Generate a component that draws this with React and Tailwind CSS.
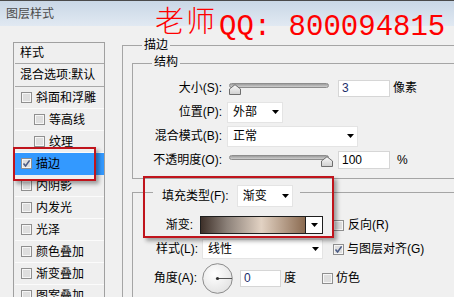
import React from "react";

const Arrow = () => (
  <svg width="7" height="4" viewBox="0 0 7 4" className="shrink-0">
    <polygon points="0,0 7,0 3.5,4" fill="#000" />
  </svg>
);

const Check = ({ checked }) => (
  <span className="w-[11px] h-[11px] shrink-0 border border-[#8f8f8f] bg-[#dedede] shadow-[inset_0_0_0_1px_#f6f6f6] flex items-center justify-center">
    {checked && (
      <svg width="9" height="9" viewBox="0 0 9 9">
        <path d="M1.5 4.5 L3.6 7 L7.6 1.4" stroke="#4a5b85" strokeWidth="1.6" fill="none" />
      </svg>
    )}
  </span>
);

const Thumb = () => (
  <svg width="12" height="11" viewBox="0 0 12 11">
    <defs>
      <linearGradient id="tg" x1="0" y1="0" x2="0" y2="1">
        <stop offset="0" stopColor="#fafafa" />
        <stop offset="1" stopColor="#cfcfcf" />
      </linearGradient>
    </defs>
    <polygon points="0.5,10.5 0.5,5 6,0.7 11.5,5 11.5,10.5" fill="url(#tg)" stroke="#6e6e6e" strokeWidth="1" />
  </svg>
);

const Slider = ({ right }) => (
  <div className="relative w-[100px] h-[11px]">
    <div className="h-[5px] rounded-full border border-[#8d8d8d] bg-linear-to-b from-[#9d9d9d] to-[#cfcfcf]" />
    <div className={right ? "absolute top-[1px] right-[-4px]" : "absolute top-[1px] left-0"}>
      <Thumb />
    </div>
  </div>
);

const Row = ({ indent, checked, selected, children }) => (
  <div
    className={
      selected
        ? "h-[22px] flex items-center bg-[#3399ff] border-b border-[#3399ff]"
        : "h-[22px] flex items-center border-b border-[#fbfbfb]"
    }
  >
    <div className={indent ? "pl-[19px] flex items-center" : "pl-[6px] flex items-center"}>
      <Check checked={checked} />
      <span className="ml-[4px] whitespace-nowrap">{children}</span>
    </div>
  </div>
);

export default function App() {
  return (
    <div className="relative w-[454px] h-[297px] overflow-hidden bg-[#f0f0f0] text-[12px] leading-none text-black font-['Liberation_Sans','Noto_Sans_CJK_SC',sans-serif]">
      {/* title bar */}
      <div className="h-[26px] border-t border-[#4a4a4a] bg-linear-to-b from-[#c9d7e6] to-[#e1e9f2] flex items-center pl-[6px] text-[#4a4a4a]">
        图层样式
      </div>

      <div className="flex">
        {/* left list */}
        <div className="ml-[13px] mt-[16px] w-[92px] h-[260px] shrink-0 border-l border-r border-t border-[#a0a0a0] bg-[#efefef] pl-[1px]">
          <div className="h-[21px] flex items-center pl-[5px] border-b border-[#a8a8a8]">样式</div>
          <div className="h-[23px] flex items-center pl-[5px] border-b border-[#a8a8a8] whitespace-nowrap">混合选项:默认</div>
          <Row>斜面和浮雕</Row>
          <Row indent>等高线</Row>
          <Row indent>纹理</Row>
          <Row checked selected>描边</Row>
          <Row>内阴影</Row>
          <Row>内发光</Row>
          <Row>光泽</Row>
          <Row>颜色叠加</Row>
          <Row>渐变叠加</Row>
          <Row>图案叠加</Row>
        </div>

        {/* right side */}
        <div className="ml-[17px] mt-[19px]">
          <div className="relative w-[400px] h-[300px] border-l border-t border-[#a5a5a5] pl-[9px] pt-[17px]">
            <span className="absolute left-[19px] top-[-7px] px-[2px] bg-[#f0f0f0]">描边</span>

            {/* 结构 */}
            <div className="relative h-[116px] border-l border-t border-b border-[#a5a5a5] pt-[12px]">
              <span className="absolute left-[19px] top-[-8px] px-[2px] bg-[#f0f0f0]">结构</span>

              <div className="h-[24px] flex items-center">
                <span className="w-[89px] text-right whitespace-nowrap">大小(S):</span>
                <div className="ml-[7px]"><Slider /></div>
                <div className="ml-[9px] w-[52px] h-[17px] bg-white border border-[#d6d6d6] flex items-center pl-[3px] text-[#1d2f6b]">3</div>
                <span className="ml-[3px]">像素</span>
              </div>

              <div className="h-[24px] flex items-center">
                <span className="w-[89px] text-right whitespace-nowrap">位置(P):</span>
                <div className="ml-[5px] w-[56px] h-[21px] bg-white border border-[#e4e4e4] flex items-center justify-between pl-[5px] pr-[3px]">
                  <span>外部</span>
                  <Arrow />
                </div>
              </div>

              <div className="h-[24px] flex items-center">
                <span className="w-[89px] text-right whitespace-nowrap">混合模式(B):</span>
                <div className="ml-[5px] w-[131px] h-[21px] bg-white border border-[#e4e4e4] flex items-center justify-between pl-[5px] pr-[3px]">
                  <span>正常</span>
                  <Arrow />
                </div>
              </div>

              <div className="h-[24px] flex items-center">
                <span className="w-[89px] text-right whitespace-nowrap">不透明度(O):</span>
                <div className="ml-[7px]"><Slider right /></div>
                <div className="ml-[9px] w-[52px] h-[18px] bg-white border border-[#d6d6d6] flex items-center pl-[3px]">100</div>
                <span className="ml-[7px]">%</span>
              </div>
            </div>

            {/* 填充 */}
            <div className="relative mt-[13px] h-[200px] border-l border-t border-[#a5a5a5] pt-[20px]">
              <div className="absolute left-[20px] top-[-8px] flex items-center bg-[#f0f0f0] pl-[9px] pr-[7px]">
                <span className="whitespace-nowrap">填充类型(F):</span>
                <div className="ml-[8px] w-[56px] h-[22px] bg-white border border-[#e4e4e4] flex items-center justify-between pl-[5px] pr-[3px]">
                  <span>渐变</span>
                  <Arrow />
                </div>
              </div>

              <div className="h-[24px] flex items-center">
                <span className="w-[60px] text-right whitespace-nowrap">渐变:</span>
                <div className="ml-[7px] w-[123px] h-[18px] border border-[#1e1e1e] flex">
                  <div className="flex-1 bg-[linear-gradient(to_right,#3e3029_0%,#8c8179_25%,#e2d2c3_58%,#8b6b51_100%)]" />
                  <div className="w-[17px] border-l border-[#1e1e1e] bg-white flex items-center justify-center">
                    <Arrow />
                  </div>
                </div>
                <div className="ml-[10px]"><Check /></div>
                <span className="ml-[4px] whitespace-nowrap">反向(R)</span>
              </div>

              <div className="h-[24px] flex items-center">
                <span className="w-[65px] text-right whitespace-nowrap">样式(L):</span>
                <div className="ml-[4px] w-[121px] h-[20px] bg-white border border-[#e4e4e4] flex items-center justify-between pl-[5px] pr-[3px]">
                  <span>线性</span>
                  <Arrow />
                </div>
                <div className="ml-[10px]"><Check checked /></div>
                <span className="ml-[3px] whitespace-nowrap">与图层对齐(G)</span>
              </div>

              <div className="mt-[2px] h-[30px] flex items-center">
                <span className="w-[64px] text-right whitespace-nowrap">角度(A):</span>
                <svg width="31" height="31" viewBox="0 0 31 31" className="ml-[5px] shrink-0">
                  <defs>
                    <radialGradient id="dg" cx="0.4" cy="0.35" r="0.7">
                      <stop offset="0" stopColor="#ffffff" />
                      <stop offset="1" stopColor="#e2e2e2" />
                    </radialGradient>
                  </defs>
                  <circle cx="15.5" cy="15.5" r="14.8" fill="url(#dg)" stroke="#8c8c8c" strokeWidth="1" />
                  <line x1="15.5" y1="15.5" x2="30" y2="15.5" stroke="#555" strokeWidth="1" />
                  <circle cx="15.5" cy="15.5" r="1.6" fill="#333" />
                </svg>
                <div className="ml-[7px] w-[41px] h-[17px] bg-white border border-[#d6d6d6] flex items-center pl-[3px] text-[#1d2f6b]">0</div>
                <span className="ml-[3px]">度</span>
                <div className="ml-[26px]"><Check /></div>
                <span className="ml-[3px]">仿色</span>
              </div>
            </div>
          </div>
        </div>
      </div>

      {/* red annotation boxes */}
      <div className="absolute left-[13px] top-[147px] w-[83px] h-[34px] border-2 border-[#c0141c] shadow-[3px_3px_4px_rgba(0,0,0,0.35)]" />
      <div className="absolute left-[143px] top-[176px] w-[191px] h-[62px] border-2 border-[#c0141c] shadow-[3px_3px_4px_rgba(0,0,0,0.35)]" />

      {/* watermark */}
      <div className="absolute left-[155px] top-[5px] text-[29px] leading-none text-[#ff0000] tracking-[2px] font-light font-['Noto_Sans_CJK_SC',sans-serif]">
        老师
      </div>
      <div className="absolute left-[219px] top-[13px] text-[29px] leading-none text-[#ff0000] whitespace-pre font-['Liberation_Mono',monospace]">
        QQ: 800094815
      </div>
    </div>
  );
}
